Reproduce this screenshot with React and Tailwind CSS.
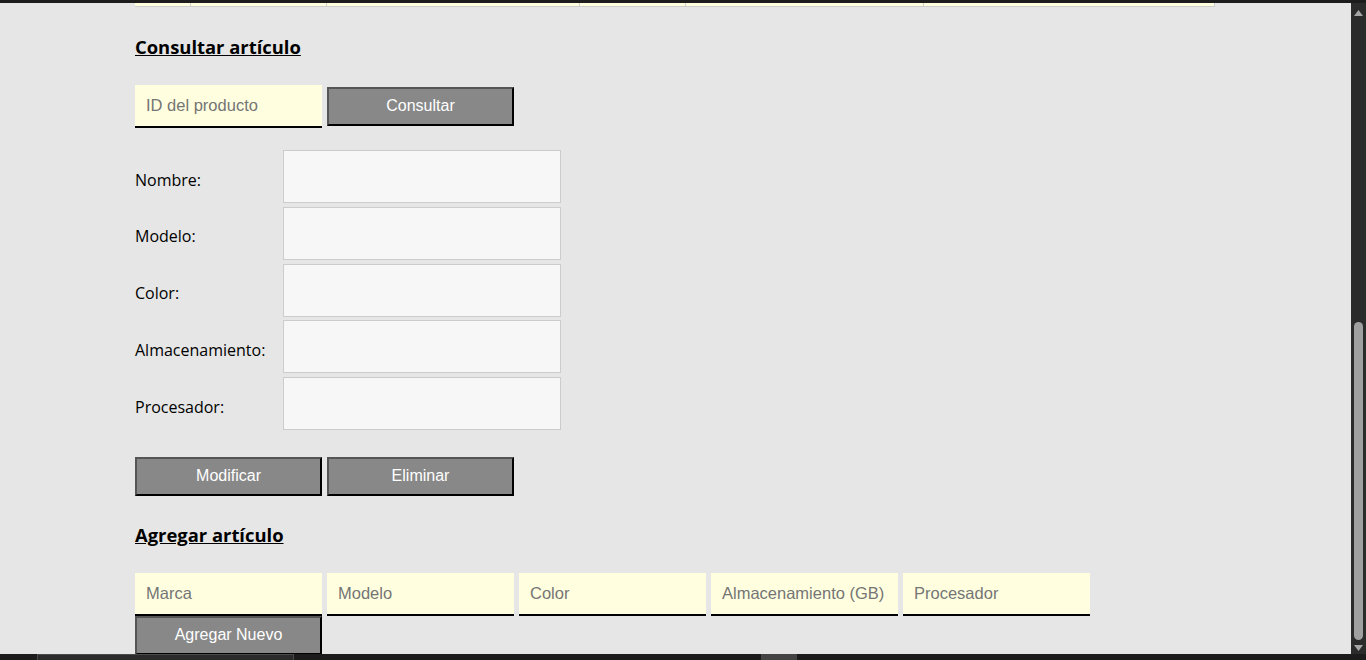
import React from "react";

const label = "font-['Open_Sans',sans-serif]";
const arial = "font-['Liberation_Sans',Arial,sans-serif]";

function Btn({ children }) {
  return (
    <button
      className={`${arial} w-[187px] h-[39px] bg-[#888888] text-white text-[16px] leading-[18px] pb-[2px] border-2 border-t-[#555555] border-l-[#555555] border-b-black border-r-black`}
    >
      {children}
    </button>
  );
}

function YInput({ placeholder }) {
  return (
    <input
      placeholder={placeholder}
      className={`${arial} w-[187px] h-[43px] bg-[#ffffe0] border-b-2 border-b-black pl-[11px] text-[16.5px] placeholder:text-[#757575] outline-none`}
    />
  );
}

const fields = ["Nombre:", "Modelo:", "Color:", "Almacenamiento:", "Procesador:"];

export default function App() {
  return (
    <div className="w-[1366px] h-[660px] flex flex-col bg-[#e6e6e6] overflow-hidden">
      <div className="h-[3px] bg-[#1c1c1c]" />
      <div className="flex-1 flex min-h-0">
        <div className="flex-1 pl-[135px] overflow-hidden">
          <div className="flex w-[1080px] h-[4px] bg-[#ffffe0] border-b border-[#cfcfcf]">
            <div className="w-[56px] border-r border-[#cfcfcf]" />
            <div className="w-[136px] border-r border-[#cfcfcf]" />
            <div className="w-[253px] border-r border-[#cfcfcf]" />
            <div className="w-[106px] border-r border-[#cfcfcf]" />
            <div className="w-[238px] border-r border-[#cfcfcf]" />
            <div className="flex-1 border-r border-[#cfcfcf]" />
          </div>
          <h3 className={`${label} mt-[28px] text-[18.4px] font-bold underline leading-[24px] text-black`}>
            Consultar artículo
          </h3>
          <div className="mt-[26px] flex items-center gap-[5px]">
            <YInput placeholder="ID del producto" />
            <Btn>Consultar</Btn>
          </div>
          <div className="mt-[22px] flex flex-col gap-[3.75px]">
            {fields.map((f) => (
              <div key={f} className="flex items-center">
                <div className={`${label} w-[148px] text-[16px] text-black pt-[6px]`}>{f}</div>
                <input className="w-[278px] h-[53px] bg-[#f7f7f7] border border-[#cccccc] outline-none" />
              </div>
            ))}
          </div>
          <div className="mt-[27px] flex gap-[5px]">
            <Btn>Modificar</Btn>
            <Btn>Eliminar</Btn>
          </div>
          <h3 className={`${label} mt-[27px] text-[18.4px] font-bold underline leading-[24px] text-black`}>
            Agregar artículo
          </h3>
          <div className="mt-[26px] flex gap-[5px]">
            <YInput placeholder="Marca" />
            <YInput placeholder="Modelo" />
            <YInput placeholder="Color" />
            <YInput placeholder="Almacenamiento (GB)" />
            <YInput placeholder="Procesador" />
          </div>
          <Btn>Agregar Nuevo</Btn>
        </div>
        <div className="w-[15px] bg-[#2b2b2b] flex flex-col items-center">
          <svg width="9" height="6" viewBox="0 0 9 6" className="mt-[7px]">
            <path d="M0 6 L4.5 0 L9 6 Z" fill="#a6a6a6" />
          </svg>
          <div className="flex-1 w-full flex flex-col items-center justify-end pb-[3px]">
            <div className="w-[9px] h-[318px] rounded-full bg-[#a0a0a0]" />
            <svg width="9" height="6" viewBox="0 0 9 6" className="mt-[5px]">
              <path d="M0 0 L9 0 L4.5 6 Z" fill="#a6a6a6" />
            </svg>
          </div>
        </div>
      </div>
      <div className="h-[6px] bg-[#1c1c1c] flex">
        <div className="ml-[37px] w-[257px] h-full bg-[#2b2b2b] border-t border-x border-[#4a4a4a]" />
        <div className="ml-[467px] w-[36px] h-full bg-[#444444]" />
      </div>
    </div>
  );
}
